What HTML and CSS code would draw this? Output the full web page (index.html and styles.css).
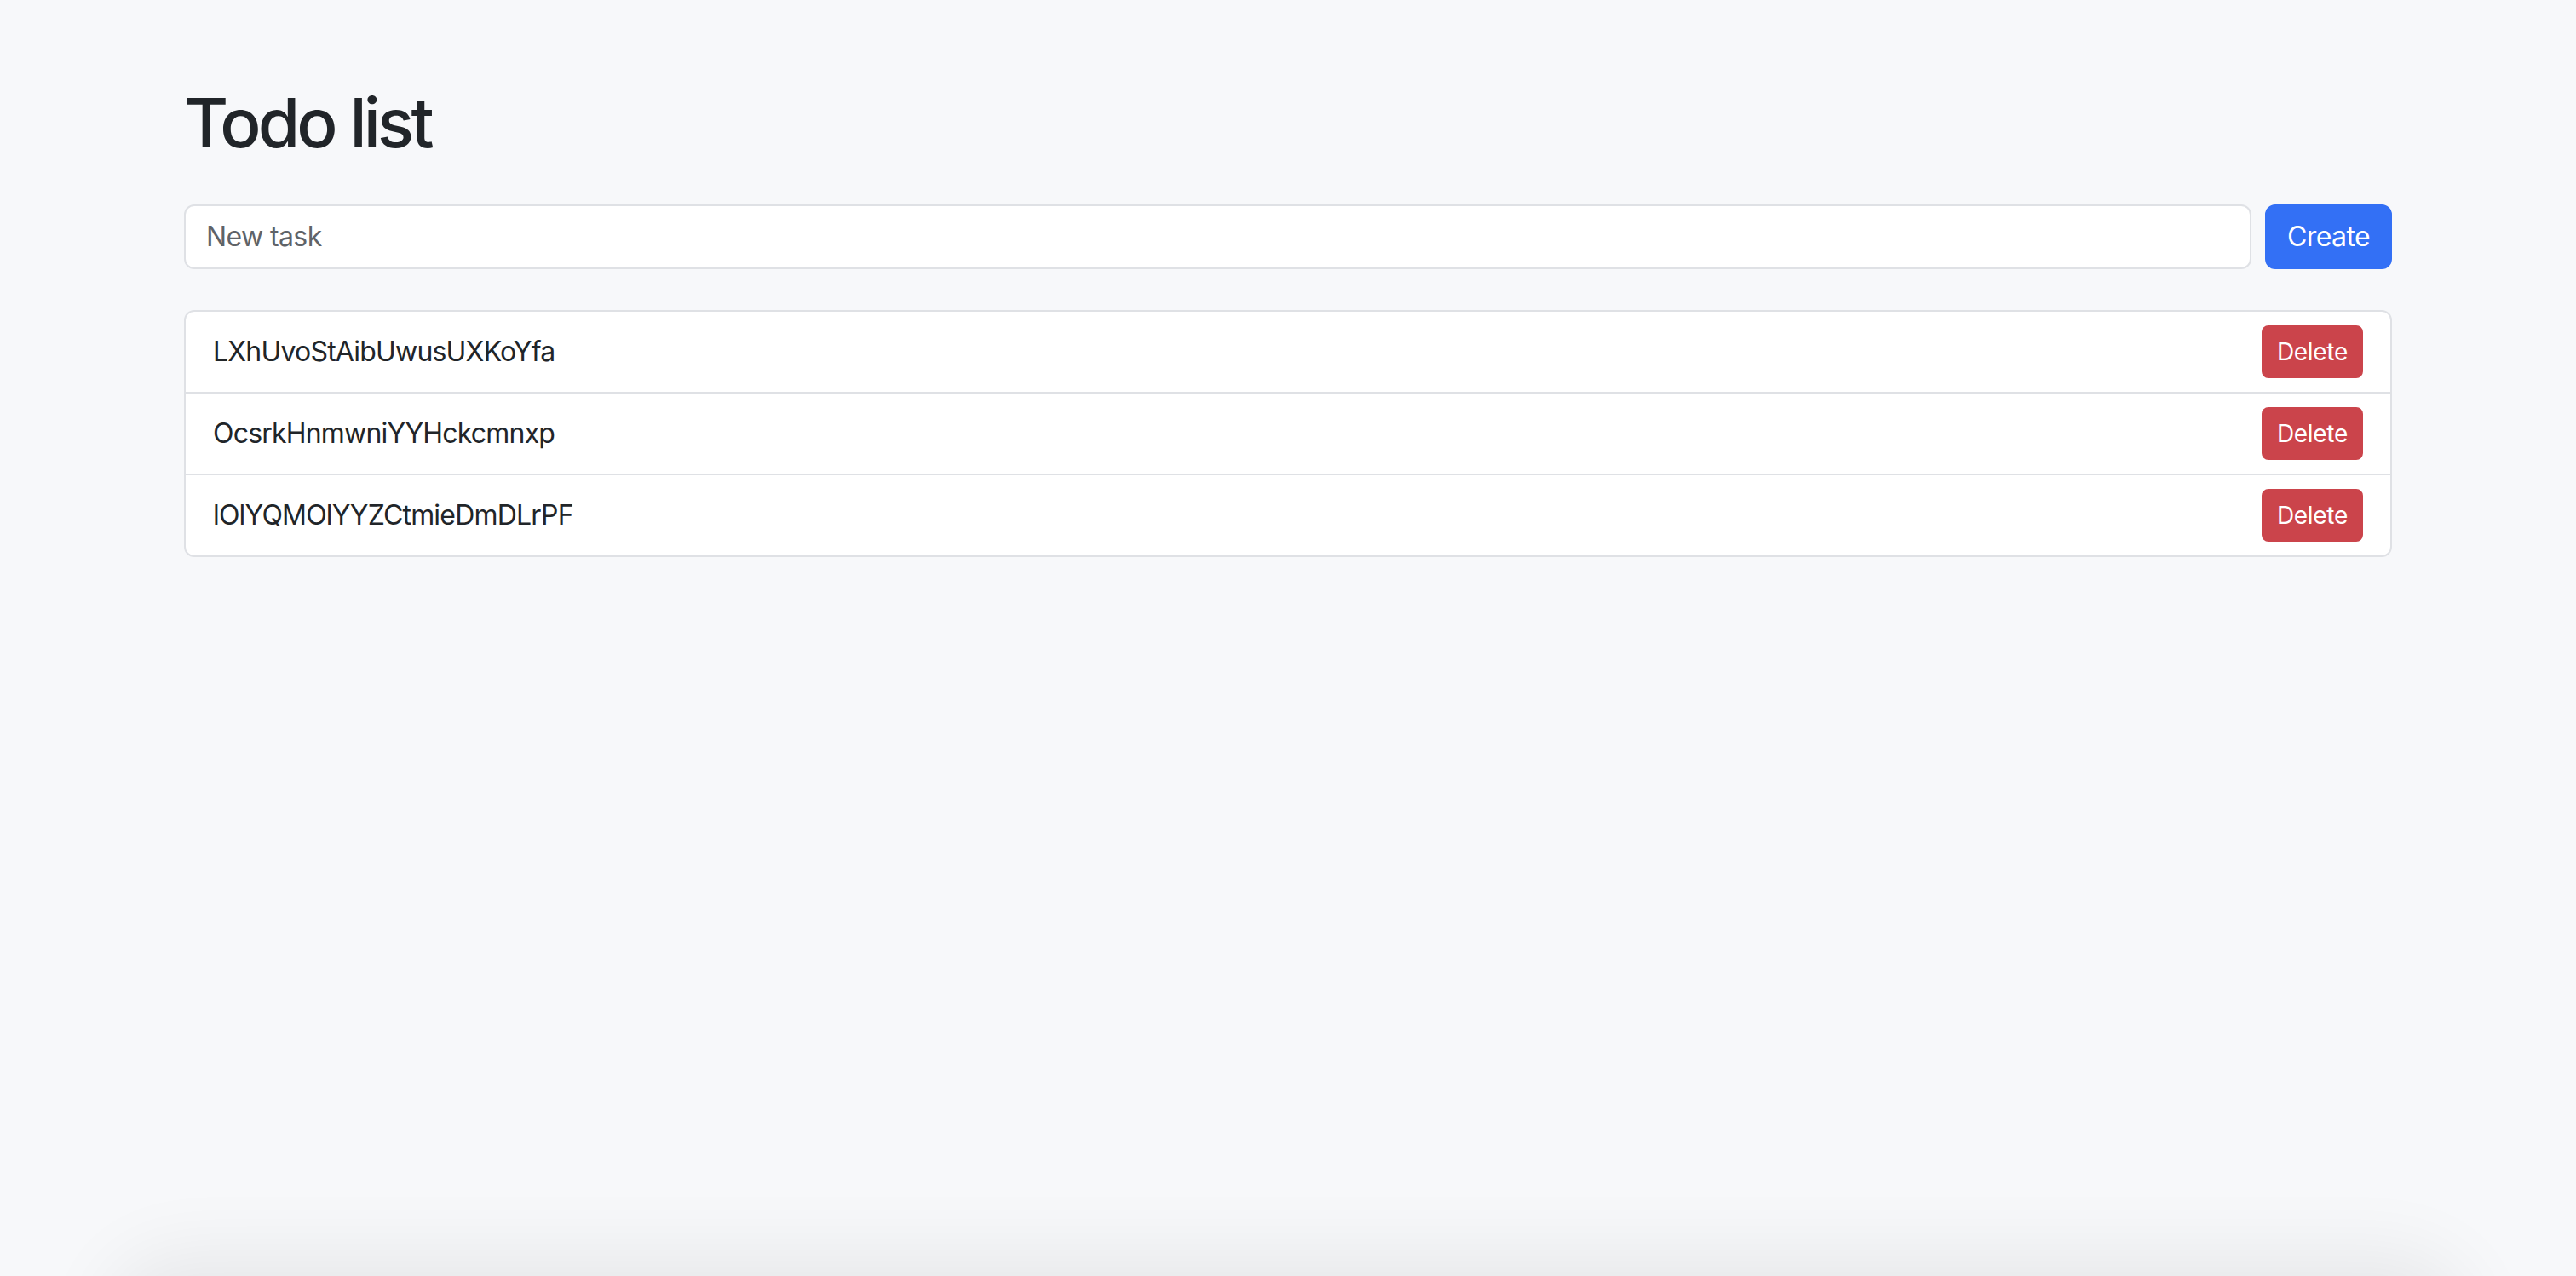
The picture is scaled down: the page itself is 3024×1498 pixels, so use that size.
FILE: index.html
```html
<!DOCTYPE html>
<html lang="en">
<head>
<meta charset="utf-8">
<title>Todo list</title>
<link rel="stylesheet" href="styles.css">
</head>
<body>
<div class="container">
  <h1 class="title">Todo list</h1>
  <form class="new-task" onsubmit="return false;">
    <input class="task-input" type="text" placeholder="New task">
    <button class="btn btn-primary" type="submit">Create</button>
  </form>
  <ul class="task-list">
    <li class="task-item"><span class="task-name">LXhUvoStAibUwusUXKoYfa</span><button class="btn btn-danger">Delete</button></li>
    <li class="task-item"><span class="task-name">OcsrkHnmwniYYHckcmnxp</span><button class="btn btn-danger">Delete</button></li>
    <li class="task-item"><span class="task-name">lOlYQMOlYYZCtmieDmDLrPF</span><button class="btn btn-danger">Delete</button></li>
  </ul>
</div>
<div class="bottom-shade"></div>
</body>
</html>
```
FILE: styles.css
```css
* { box-sizing: border-box; }
html, body { height: 100%; }
body {
  margin: 0;
  background: #f7f8fa;
  color: #212529;
  font-family: Inter, "Noto Sans", Roboto, "Liberation Sans", sans-serif;
  font-size: 32px;
  line-height: 1.5;
  overflow: hidden;
}
.container {
  max-width: 2640px;
  margin: 0 auto;
  padding: 96px 24px;
}
.title {
  margin: 0 0 48px;
  font-size: 80px;
  font-weight: 500;
  line-height: 1.2;
  letter-spacing: -3.8px;
}
.new-task {
  display: flex;
  gap: 16px;
  margin: 0 0 48px;
}
.task-input {
  flex: 1;
  font: inherit;
  font-size: 32px;
  line-height: 1.5;
  letter-spacing: -0.6px;
  padding: 12px 24px;
  border: 2px solid #dfe1e5;
  border-radius: 12px;
  background: #fff;
  color: #212529;
  outline: none;
}
.task-input::placeholder { color: #5f6368; }
.btn {
  font: inherit;
  line-height: 1.5;
  border: 2px solid transparent;
  color: #fff;
  cursor: pointer;
}
.btn-primary {
  font-size: 32px;
  letter-spacing: -0.6px;
  padding: 12px 24px;
  border-radius: 12px;
  background: #3370f5;
  border-color: #3370f5;
}
.btn-danger {
  font-size: 28px;
  letter-spacing: -0.3px;
  padding: 8px 16px;
  border-radius: 8px;
  background: #cb444b;
  border-color: #cb444b;
}
.task-list {
  list-style: none;
  margin: 0;
  padding: 0;
  background: #fff;
  border: 2px solid #dfe1e5;
  border-radius: 12px;
}
.task-item {
  display: flex;
  align-items: center;
  justify-content: space-between;
  padding: 16px 32px;
}
.task-item + .task-item { border-top: 2px solid #dfe1e5; }
.task-name { font-size: 32px; letter-spacing: -0.8px; }
.bottom-shade {
  position: fixed;
  left: 150px;
  right: 150px;
  top: 100%;
  height: 200px;
  border-radius: 60px;
  box-shadow: 0 0 90px 24px rgba(0, 0, 0, 0.07);
}
```
